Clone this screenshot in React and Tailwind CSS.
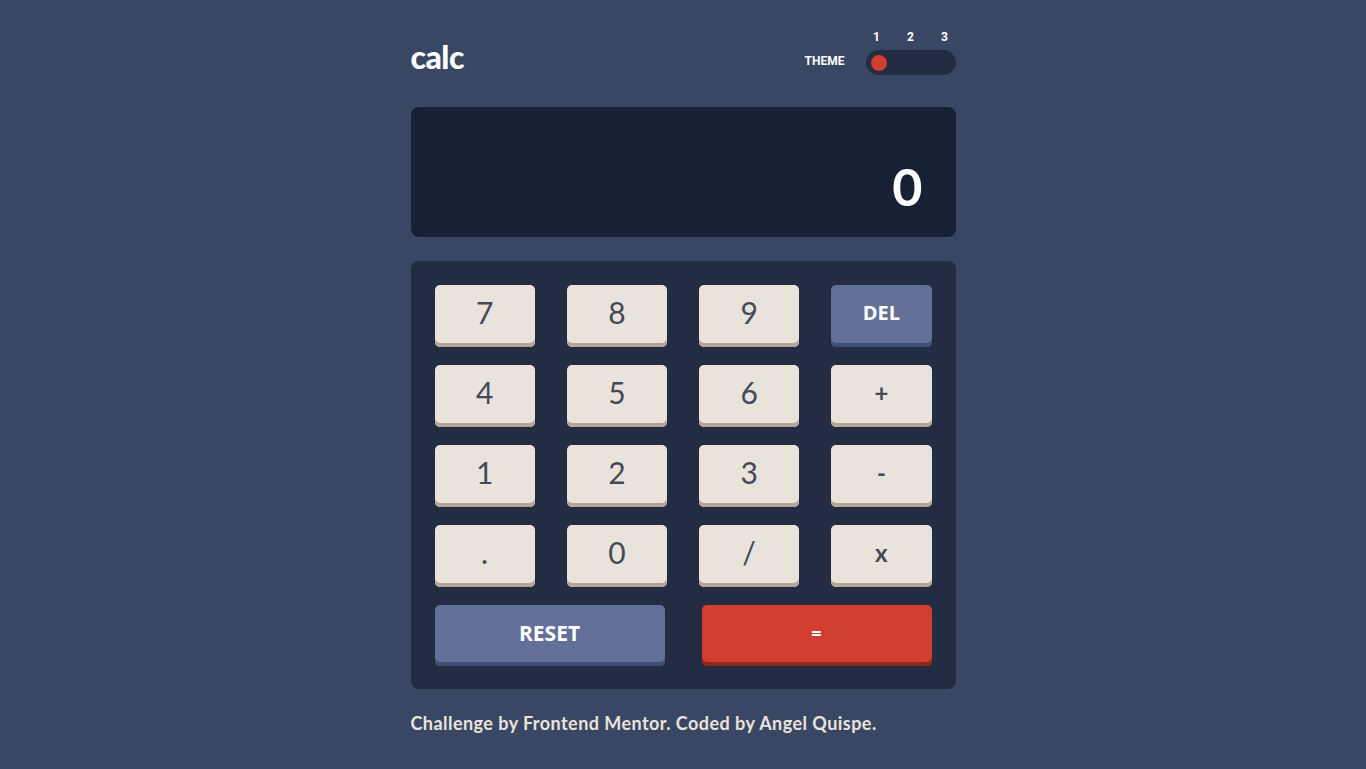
import React from "react";

const keys = [
  { label: "7" },
  { label: "8" },
  { label: "9" },
  { label: "DEL", kind: "blue" },
  { label: "4" },
  { label: "5" },
  { label: "6" },
  { label: "+", op: true },
  { label: "1" },
  { label: "2" },
  { label: "3" },
  { label: "-", op: true },
  { label: "." },
  { label: "0" },
  { label: "/" },
  { label: "x", op: true },
];

const Key = ({ label, kind, op }) => {
  if (kind === "blue") {
    return (
      <button className="h-[62px] rounded-[5px] bg-[#637097] shadow-[inset_0_-4px_0_#404e72] pb-[6px] text-white text-[20px] font-bold font-['Open_Sans',sans-serif] flex items-center justify-center">
        {label}
      </button>
    );
  }
  return (
    <button
      className={
        op
          ? "h-[62px] rounded-[5px] bg-[#eae3dc] shadow-[inset_0_-4px_0_#b4a597] pb-[6px] text-[#434a59] text-[24px] font-bold font-['Lato',sans-serif] flex items-center justify-center"
          : "h-[62px] rounded-[5px] bg-[#eae3dc] shadow-[inset_0_-4px_0_#b4a597] pb-[7px] text-[#434a59] text-[30px] font-['Lato',sans-serif] flex items-center justify-center"
      }
    >
      {label}
    </button>
  );
};

export default function App() {
  return (
    <div className="min-h-[769px] bg-[#3a4764] font-['Lato',sans-serif]">
      <div className="w-[545px] mx-auto pt-[31px]">
        {/* header */}
        <div className="flex justify-between items-end">
          <h1 className="text-white text-[32px] font-black leading-none mb-[2px] font-['Lato',sans-serif] tracking-[-0.5px]">
            calc
          </h1>
          <div className="flex items-end gap-[21px]">
            <span className="text-white text-[12px] font-bold mb-[5px] font-['Roboto',sans-serif]">
              THEME
            </span>
            <div className="flex flex-col gap-[6px]">
              <div className="flex justify-between px-[3px] text-white text-[12px] font-bold leading-[13px] font-['Roboto',sans-serif]">
                <span className="w-[16px] text-center">1</span>
                <span className="w-[16px] text-center">2</span>
                <span className="w-[16px] text-center">3</span>
              </div>
              <div className="w-[90px] h-[25px] rounded-full bg-[#232c43] flex items-center px-[5px]">
                <div className="w-[16px] h-[16px] rounded-full bg-[#d03f2f]" />
              </div>
            </div>
          </div>
        </div>

        {/* display */}
        <div className="mt-[32px] h-[130px] rounded-[8px] bg-[#182034] flex items-end justify-end pr-[33px] pb-[25px]">
          <span className="text-white text-[52px] font-bold leading-none">0</span>
        </div>

        {/* keypad */}
        <div className="mt-[24px] rounded-[8px] bg-[#232c43] pt-[24px] pb-[23px] pl-[24px] pr-[24px]">
          <div className="grid grid-cols-4 gap-x-[32px] gap-y-[18px]">
            {keys.map((k) => (
              <Key key={k.label} {...k} />
            ))}
          </div>
          <div className="grid grid-cols-2 gap-x-[37px] mt-[18px]">
            <button className="h-[61px] rounded-[5px] bg-[#637097] shadow-[inset_0_-4px_0_#404e72] pb-[4px] text-white text-[21px] font-bold font-['Open_Sans',sans-serif] flex items-center justify-center">
              RESET
            </button>
            <button className="h-[61px] rounded-[5px] bg-[#d03f2f] shadow-[inset_0_-4px_0_#93261a] pb-[4px] text-white text-[18px] font-bold font-['Open_Sans',sans-serif] flex items-center justify-center">
              =
            </button>
          </div>
        </div>

        <p className="mt-[21px] text-[#eae3dc] text-[18px] font-bold tracking-[0.45px]">
          Challenge by Frontend Mentor. Coded by Angel Quispe.
        </p>
      </div>
    </div>
  );
}
